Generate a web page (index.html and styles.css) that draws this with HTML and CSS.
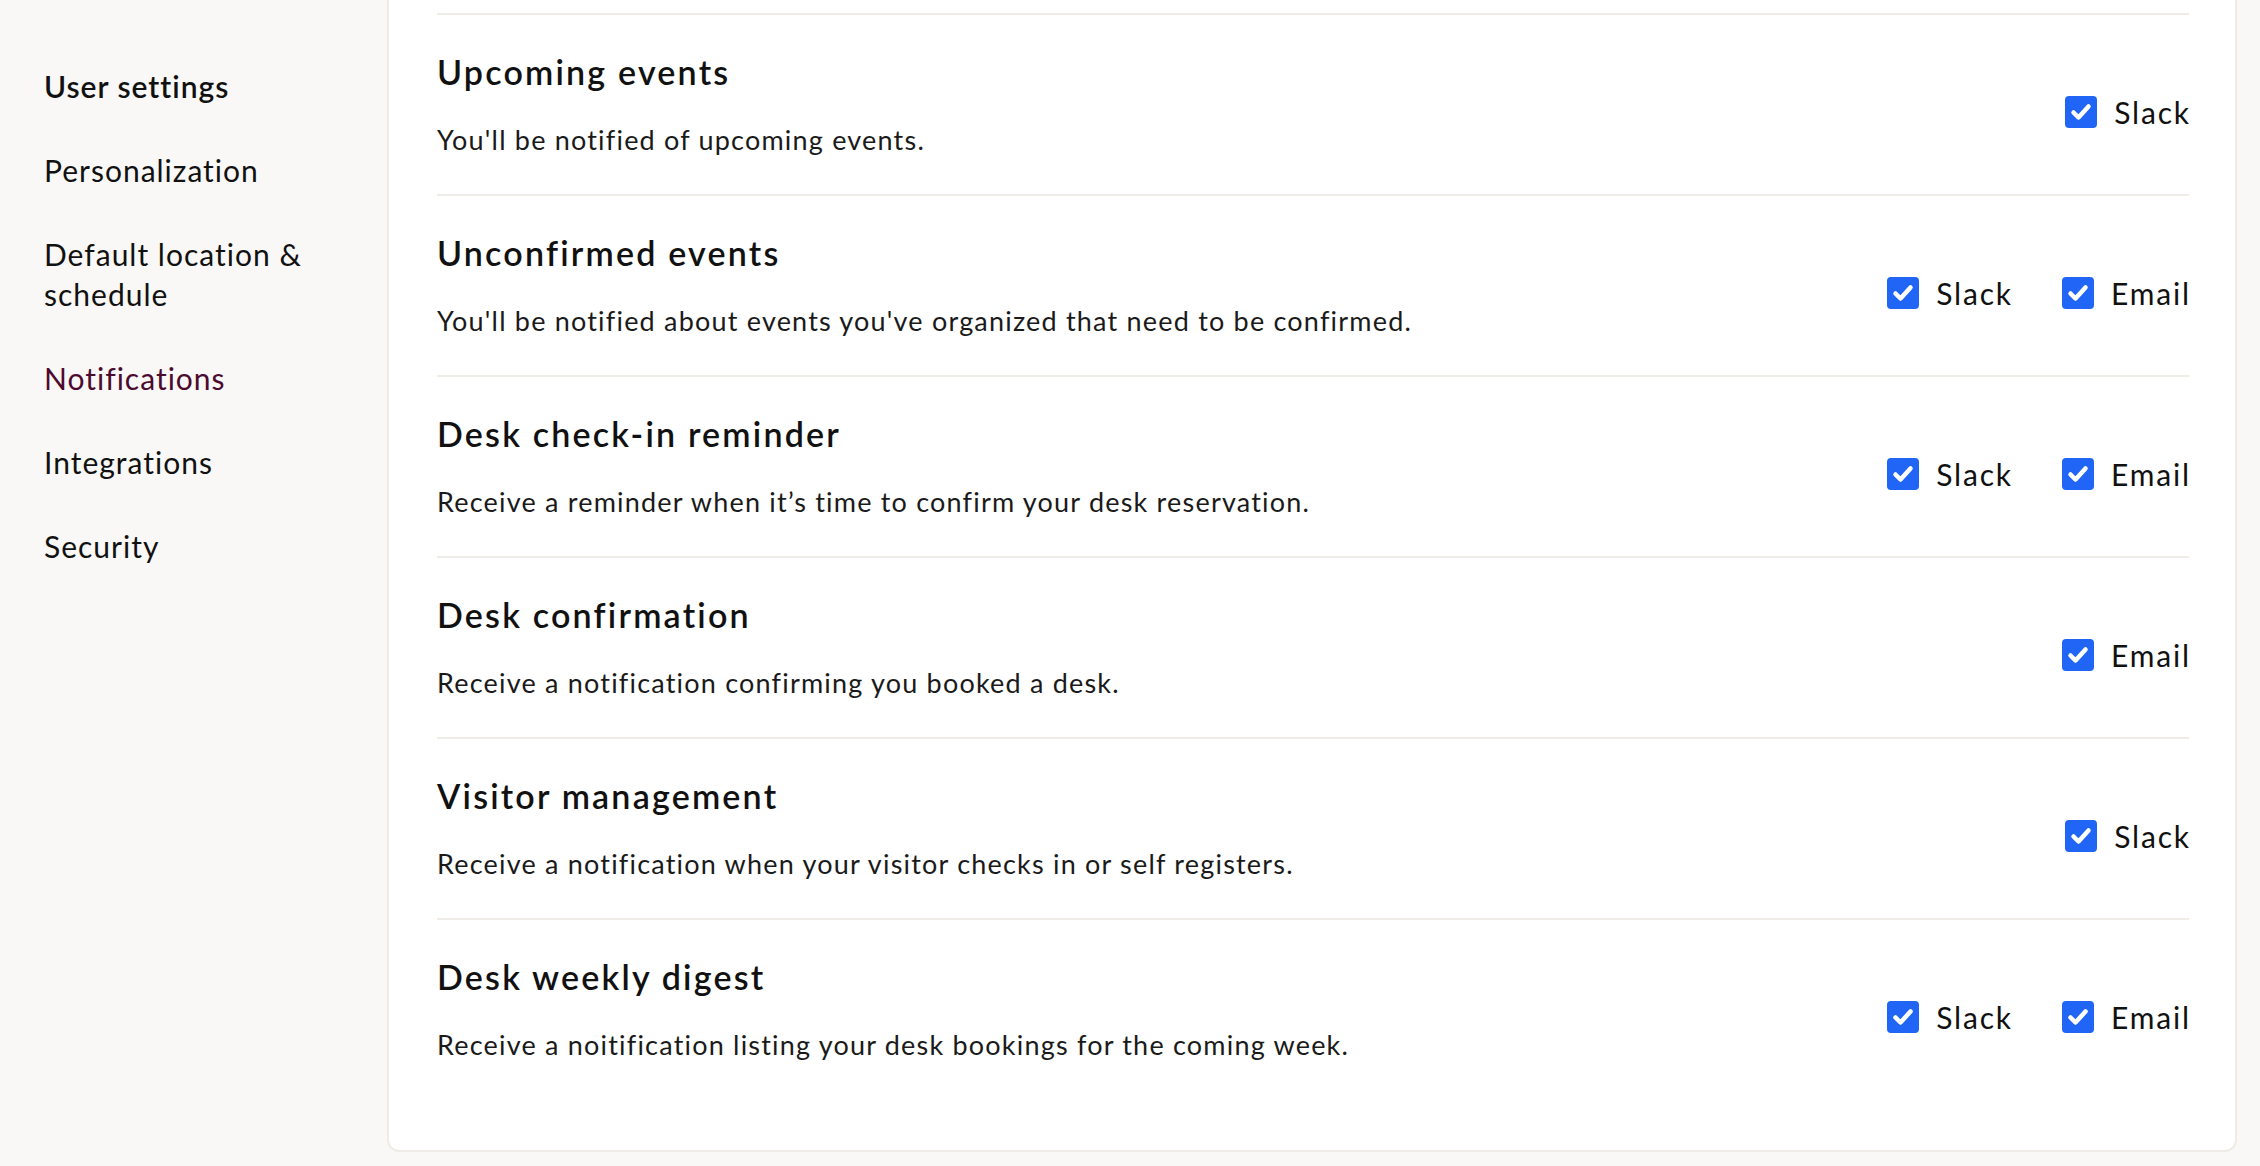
FILE: index.html
```html
<!DOCTYPE html>
<html lang="en">
<head>
<meta charset="utf-8">
<title>Notifications</title>
<link rel="stylesheet" href="styles.css">
</head>
<body>
<div class="page">
  <nav class="sidebar">
    <a class="nav-item nav-head">User settings</a>
    <a class="nav-item">Personalization</a>
    <a class="nav-item">Default location &amp; schedule</a>
    <a class="nav-item active">Notifications</a>
    <a class="nav-item">Integrations</a>
    <a class="nav-item">Security</a>
  </nav>
  <main class="card">
    <div class="row">
      <div class="text">
        <h3 class="title">Upcoming events</h3>
        <p class="desc">You'll be notified of upcoming events.</p>
      </div>
      <div class="controls">
        <label class="opt"><span class="box"><svg viewBox="0 0 32 32"><path d="M8.5 16.5 L13.5 21.5 L23.5 10.5"/></svg></span><span class="lbl">Slack</span></label>
      </div>
    </div>
    <div class="row">
      <div class="text">
        <h3 class="title">Unconfirmed events</h3>
        <p class="desc">You'll be notified about events you've organized that need to be confirmed.</p>
      </div>
      <div class="controls">
        <label class="opt"><span class="box"><svg viewBox="0 0 32 32"><path d="M8.5 16.5 L13.5 21.5 L23.5 10.5"/></svg></span><span class="lbl">Slack</span></label>
        <label class="opt"><span class="box"><svg viewBox="0 0 32 32"><path d="M8.5 16.5 L13.5 21.5 L23.5 10.5"/></svg></span><span class="lbl">Email</span></label>
      </div>
    </div>
    <div class="row">
      <div class="text">
        <h3 class="title">Desk check-in reminder</h3>
        <p class="desc">Receive a reminder when it’s time to confirm your desk reservation.</p>
      </div>
      <div class="controls">
        <label class="opt"><span class="box"><svg viewBox="0 0 32 32"><path d="M8.5 16.5 L13.5 21.5 L23.5 10.5"/></svg></span><span class="lbl">Slack</span></label>
        <label class="opt"><span class="box"><svg viewBox="0 0 32 32"><path d="M8.5 16.5 L13.5 21.5 L23.5 10.5"/></svg></span><span class="lbl">Email</span></label>
      </div>
    </div>
    <div class="row">
      <div class="text">
        <h3 class="title">Desk confirmation</h3>
        <p class="desc">Receive a notification confirming you booked a desk.</p>
      </div>
      <div class="controls">
        <label class="opt"><span class="box"><svg viewBox="0 0 32 32"><path d="M8.5 16.5 L13.5 21.5 L23.5 10.5"/></svg></span><span class="lbl">Email</span></label>
      </div>
    </div>
    <div class="row">
      <div class="text">
        <h3 class="title">Visitor management</h3>
        <p class="desc">Receive a notification when your visitor checks in or self registers.</p>
      </div>
      <div class="controls">
        <label class="opt"><span class="box"><svg viewBox="0 0 32 32"><path d="M8.5 16.5 L13.5 21.5 L23.5 10.5"/></svg></span><span class="lbl">Slack</span></label>
      </div>
    </div>
    <div class="row">
      <div class="text">
        <h3 class="title">Desk weekly digest</h3>
        <p class="desc">Receive a noitification listing your desk bookings for the coming week.</p>
      </div>
      <div class="controls">
        <label class="opt"><span class="box"><svg viewBox="0 0 32 32"><path d="M8.5 16.5 L13.5 21.5 L23.5 10.5"/></svg></span><span class="lbl">Slack</span></label>
        <label class="opt"><span class="box"><svg viewBox="0 0 32 32"><path d="M8.5 16.5 L13.5 21.5 L23.5 10.5"/></svg></span><span class="lbl">Email</span></label>
      </div>
    </div>
  </main>
</div>
</body>
</html>
```

FILE: styles.css
```css
* { box-sizing: border-box; }
html, body {
  margin: 0;
  padding: 0;
  background: #f9f8f6;
  font-family: "Lato", "Noto Sans", sans-serif;
  color: #111;
}
.page {
  display: flex;
  align-items: flex-start;
  width: 2260px;
  height: 1166px;
  overflow: hidden;
}
.sidebar {
  width: 387px;
  flex: none;
  padding: 66px 30px 0 44px;
  display: flex;
  flex-direction: column;
  gap: 44px;
}
.nav-item {
  display: block;
  font-size: 30px;
  line-height: 40px;
  color: #111;
  text-decoration: none;
  letter-spacing: 1px;
}
.nav-head { font-weight: 600; }
.nav-item.active { color: #4d0a2f; }
.card {
  width: 1850px;
  flex: none;
  background: #fff;
  border: 2px solid #efebe7;
  border-top: none;
  border-radius: 0 0 12px 12px;
  padding: 13px 46px 51px 48px;
}
.row {
  display: flex;
  align-items: center;
  justify-content: space-between;
  border-top: 2px solid #f0ece8;
  padding: 36px 0 35px;
  height: 181px;
}
.text { display: flex; flex-direction: column; }
.title {
  margin: 0;
  font-size: 34px;
  line-height: 42px;
  font-weight: 600;
  letter-spacing: 2.2px;
}
.desc {
  margin: 28px 0 0;
  font-size: 27px;
  line-height: 38px;
  font-weight: 400;
  color: #1a1a1a;
  letter-spacing: 1.2px;
}
.controls {
  display: flex;
  align-items: center;
  gap: 51px;
  margin-top: 14px;
}
.opt {
  display: flex;
  align-items: center;
  gap: 17px;
}
.box {
  width: 32px;
  height: 32px;
  border-radius: 4px;
  background: #2065f6;
  display: flex;
}
.box svg { width: 32px; height: 32px; }
.box path {
  fill: none;
  stroke: #fff;
  stroke-width: 4.5;
  stroke-linecap: round;
  stroke-linejoin: round;
}
.lbl {
  font-size: 30px;
  line-height: 40px;
  letter-spacing: 1.8px;
  margin-right: -1.8px;
}
```
